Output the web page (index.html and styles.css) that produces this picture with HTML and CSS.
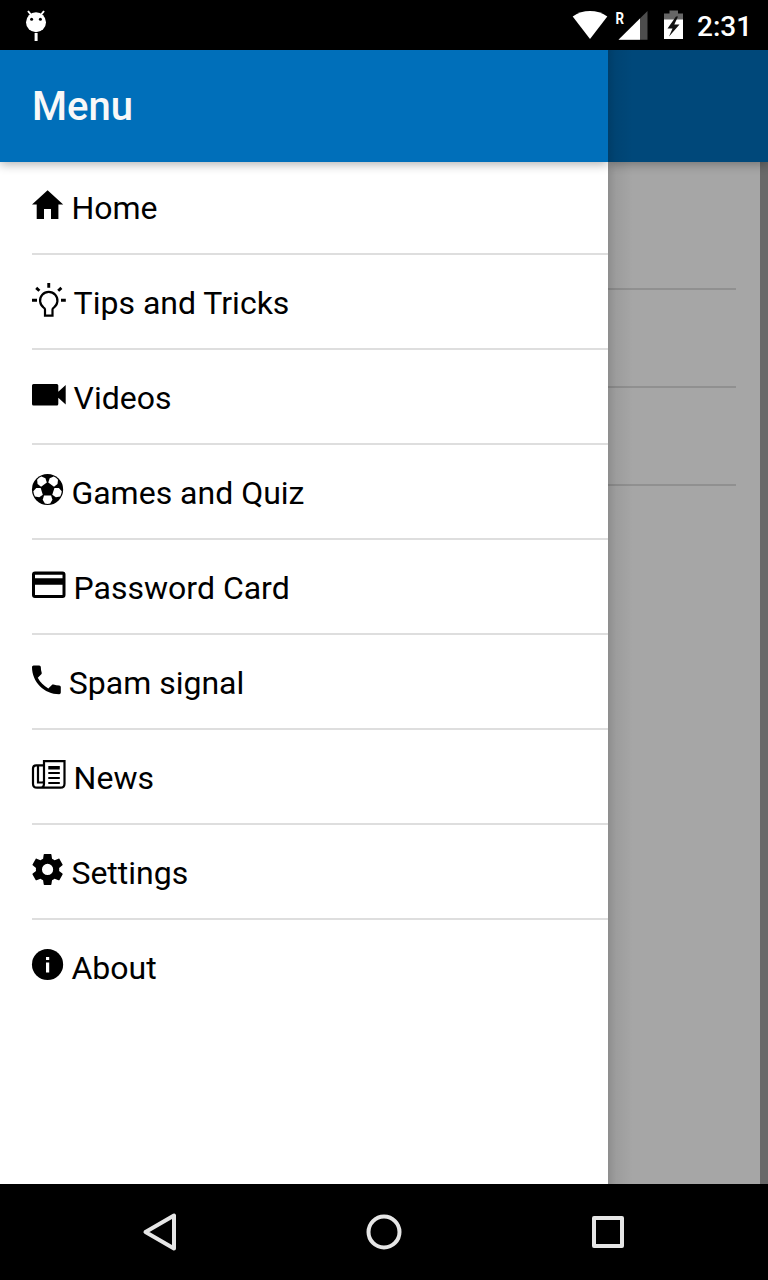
FILE: index.html
```html
<!DOCTYPE html>
<html lang="en">
<head>
<meta charset="utf-8">
<title>Menu</title>
<link rel="stylesheet" href="styles.css">
</head>
<body>
<div class="screen">
  <header class="status">
    <svg class="debug" width="24" height="34" viewBox="24 8 24 34"><path d="M28 11l4 5M44 11l-4 5" stroke="#fff" stroke-width="2"/><circle cx="36" cy="22.2" r="10" fill="#fff"/><path d="M34.6 33h3v8h-3z" fill="#fff"/><circle cx="31.6" cy="19.3" r="1.5"/><circle cx="40.4" cy="19.3" r="1.5"/></svg>
    <svg class="signals" width="120" height="50" viewBox="570 0 120 50">
      <path d="M572.7 16.5C583 9.2 597 9.2 607.3 16.5L590 39z" fill="#fff"/>
      <path d="M647.5 11v28.700H618.500z" fill="#4d4d4d"/><path d="M640 18.500v21.200H618.500z" fill="#fff"/>
      <path d="M664 13.500h5.500v-3h8.500v3h5V20h-19z" fill="#666"/><path d="M664 19.500h19V39h-19z" fill="#fff"/>
      <path d="M676 16.500l-8.500 12h5l-3.500 8 10.500-12h-5.200l3.700-8z" fill="#111"/>
      <text x="615.5" y="23.500" class="roam" textLength="8.500" lengthAdjust="spacingAndGlyphs">R</text>
    </svg>
    <span class="clock">2:31</span>
  </header>
  <main class="app">
    <nav class="drawer">
      <h1 class="title">Menu</h1>
      <ul class="list">
        <li class="item"><svg width="31.400" height="93"><path d="M15.600 30.200L31.200 44.600H26.400V59H19V49h-7v10H4.700V44.600H0z"/></svg>Home</li>
        <li class="item"><svg width="33.600" height="93"><path class="line" d="M16.750 28v4.700M0 45.300h5M29 45.300h4.800M4.200 32.900l3.200 2.900M29.400 32.900l-3.200 2.900" stroke-width="2.900"/><path class="line" d="M13 60.600V54.600c0-1-.5-1.500-1.300-2A8.700 8.700 0 1 1 21.800 52.600c-.9.6-1.300 1.100-1.300 2v6z" stroke-width="2.200"/></svg>Tips and Tricks</li>
        <li class="item"><svg width="33.600" height="93"><path d="M1.500 34H24.800q1.500 0 1.500 1.500V41.700L33.700 35v19.400l-7.400-6.700v6.400q0 1.500-1.500 1.500H1.500Q0 55.600 0 54.100V35.500Q0 34 1.500 34z"/></svg>Videos</li>
        <li class="item"><svg width="31.400" height="93"><circle cx="15.550" cy="44.500" r="15.600"/><g fill="#fff"><path id="patch" d="M12 50.600h7.100l1.300 4.200-2.200 3.800q-2.600.6-5.300 0l-2.200-3.800z"/><use href="#patch" transform="rotate(72 15.550 44.500)"/><use href="#patch" transform="rotate(144 15.550 44.500)"/><use href="#patch" transform="rotate(216 15.550 44.500)"/><use href="#patch" transform="rotate(288 15.550 44.500)"/></g></svg>Games and Quiz</li>
        <li class="item"><svg width="33.600" height="93"><path fill-rule="evenodd" d="M3 31.500H30.500q3 0 3 3V55q0 3-3 3H3q-3 0-3-3V34.500q0-3 3-3zM3 34.700V38.200H30.500V34.700zM3 44.700V54.900H30.500V44.700z"/></svg>Password Card</li>
        <li class="item"><svg width="28.800" height="93"><path transform="translate(-4.800 25.600) scale(1.600)" d="M6.620 10.790c1.440 2.830 3.760 5.140 6.590 6.590l2.200-2.200c.27-.27.67-.36 1.020-.24 1.120.37 2.330.57 3.570.57.55 0 1 .45 1 1V20c0 .55-.45 1-1 1-9.390 0-17-7.610-17-17 0-.55.45-1 1-1h3.500c.55 0 1 .45 1 1 0 1.250.2 2.450.57 3.570.11.350.03.740-.25 1.020z"/></svg>Spam signal</li>
        <li class="item"><svg width="33.600" height="93"><path class="line" d="M12 31.200h20.500v22.500q0 4-4 4H5q-4 0-4-4V38.500q0-3.200 3.200-3.200H12zM12 35v18.700q0 4-4 4M6 35.300v17.200h4q1.600 0 2.300-1" stroke-width="2.200"/><path d="M16.300 36h11.500v3.600H16.300zM16.300 42h11.500v2H16.300zM16.300 47h11.500v2H16.300zM16.300 52h11.500v2H16.300z"/></svg>News</li>
        <li class="item"><svg width="31.400" height="93"><path transform="translate(-3.100 25.800) scale(1.555)" d="M19.430 12.980c.04-.32.070-.64.070-.98s-.03-.66-.07-.98l2.110-1.650c.19-.15.240-.42.120-.64l-2-3.460c-.12-.22-.39-.3-.61-.22l-2.490 1c-.52-.4-1.080-.73-1.690-.98l-.38-2.650C14.460 2.180 14.250 2 14 2h-4c-.25 0-.46.180-.49.420l-.38 2.650c-.61.250-1.170.59-1.690.98l-2.490-1c-.23-.09-.49 0-.61.220l-2 3.460c-.13.220-.07.490.12.640l2.110 1.650c-.04.320-.07.650-.07.980s.03.660.07.980l-2.110 1.650c-.19.150-.24.420-.12.640l2 3.460c.12.220.39.300.61.220l2.490-1c.52.400 1.080.730 1.690.980l.38 2.650c.03.240.24.420.49.420h4c.25 0 .46-.18.49-.42l.38-2.650c.61-.25 1.170-.59 1.690-.98l2.490 1c.23.090.49 0 .61-.22l2-3.460c.12-.22.070-.49-.12-.64zM12 15.600a3.600 3.600 0 1 1 0-7.200 3.600 3.600 0 0 1 0 7.200z"/></svg>Settings</li>
        <li class="item"><svg width="31.400" height="93"><circle cx="15.550" cy="44.500" r="15.600"/><path fill="#fff" d="M14 37h3.200v3H14zM14 42.600h3.200v10H14z"/></svg>About</li>
      </ul>
    </nav>
    <section class="page">
      <div class="page-bar"></div>
      <div class="page-body">
        <div class="page-rows"><div class="page-row"></div><div class="page-row"></div><div class="page-row"></div></div>
      </div>
    </section>
  </main>
  <footer class="navbar">
    <svg width="768" height="96" viewBox="0 1184 768 96"><g fill="none" stroke="#e6e6e6" stroke-width="4" stroke-linejoin="round"><path d="M174 1215.500v33L145.500 1232z"/><circle cx="384" cy="1232" r="15.500"/><path d="M594 1218h28v28h-28z"/></g></svg>
  </footer>
</div>
</body>
</html>
```
FILE: styles.css
```css
* { box-sizing: border-box; }
body { margin: 0; font-family: Roboto, "Liberation Sans", sans-serif; background: #fff; }
.screen { width: 768px; height: 1280px; display: flex; flex-direction: column; overflow: hidden; }
.status { height: 50px; flex: none; background: #000; display: flex; align-items: center; color: #fff; }
.debug { margin-left: 24px; }
.signals { margin-left: 522px; flex: none; }
.roam { font-size: 16px; font-weight: 700; fill: #fff; }
.clock { margin-left: 7px; font-size: 28px; line-height: 50px; font-weight: 500; padding-top: 3px; }
.app { flex: 1; display: flex; min-height: 0; }
.drawer { width: 608px; flex: none; background: #fff; }
.title { margin: 0; height: 112px; padding-left: 32px; background: #006fba; color: #f8f8f8; font-size: 40px; line-height: 114px; font-weight: 500; box-shadow: 0 2px 10px rgba(0, 0, 0, .32); clip-path: inset(0 0 -14px 0); }
.list { list-style: none; margin: -2px 0 0; padding: 0 0 0 32px; }
.item { height: 95px; border-bottom: 2px solid #dedede; display: flex; gap: 8px; font-size: 32px; line-height: 97px; color: #000; white-space: nowrap; }
.item:last-child { border-bottom: 0; }
.item svg { flex: none; overflow: visible; }
.line { fill: none; stroke: #000; }
.page { flex: 1; display: flex; flex-direction: column; background-color: #a6a6a6; position: relative; }
.page::after { content: ""; position: absolute; inset: 0; background: linear-gradient(90deg, rgba(0, 0, 0, .15), rgba(0, 0, 0, .06) 8px, transparent 25px); }
.page-bar { height: 112px; flex: none; background: #00487a; box-shadow: 0 2px 10px rgba(0, 0, 0, .32); clip-path: inset(0 0 -14px 0); z-index: 0; }
.page-body { flex: 1; border-right: 8px solid #696969; padding: 30px 24px 0 0; }
.page-row { height: 98px; border-bottom: 2px solid #909090; }
.navbar { height: 96px; flex: none; background: #000; }
.navbar svg { display: block; }
```
